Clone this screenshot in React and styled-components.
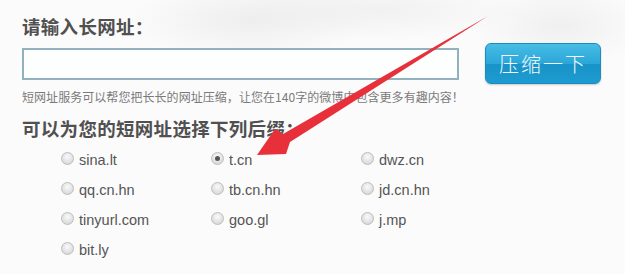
import React from 'react';
import styled, { createGlobalStyle } from 'styled-components';

const GlobalStyle = createGlobalStyle`
  html, body {
    margin: 0;
    padding: 0;
  }
  body {
    background: #fbfbfb;
    font-family: "Liberation Sans", "Noto Sans CJK SC", sans-serif;
  }
`;

const Page = styled.div`
  position: relative;
  width: 625px;
  height: 274px;
  overflow: hidden;
  box-sizing: border-box;
  padding: 13px 0 0 22px;
  background:
    radial-gradient(ellipse 120px 40px at 250px 20px, rgba(225, 225, 225, 0.5), transparent),
    radial-gradient(ellipse 90px 40px at 560px 25px, rgba(228, 228, 228, 0.5), transparent),
    radial-gradient(ellipse 140px 30px at 380px 10px, rgba(230, 230, 230, 0.5), transparent),
    #fbfbfb;
`;

const Heading = styled.h2`
  margin: 0;
  font-family: "Noto Sans CJK SC", sans-serif;
  font-size: 18.5px;
  font-weight: 700;
  line-height: 26px;
  color: #505050;
  letter-spacing: 0.3px;
`;

const InputRow = styled.div`
  display: flex;
  align-items: center;
  margin-top: 4px;
`;

const UrlInput = styled.input`
  box-sizing: border-box;
  width: 437px;
  height: 32px;
  border: 2px solid #93b0bf;
  background: #fdfefe;
  outline: none;
  padding: 0 6px;
`;

const ShrinkButton = styled.button`
  box-sizing: border-box;
  margin-left: 26px;
  width: 116px;
  height: 41px;
  border: 1px solid #1a8cc0;
  border-radius: 6px;
  background: linear-gradient(#47bde6 0%, #2aa6d8 50%, #1993c8 52%, #1d9bd0 100%);
  box-shadow: 0 1px 2px rgba(0, 0, 0, 0.2);
  color: #f4fbff;
  font-family: "Noto Sans CJK SC", sans-serif;
  font-size: 20px;
  font-weight: 300;
  letter-spacing: 2px;
  cursor: pointer;
`;

const Hint = styled.p`
  margin: 4px 0 0;
  font-family: "Noto Sans CJK SC", sans-serif;
  font-size: 12px;
  line-height: 18px;
  color: #7a7a7a;
  letter-spacing: 0.05px;
`;

const SubHeading = styled(Heading)`
  margin-top: 9px;
`;

const OptionGrid = styled.div`
  display: grid;
  grid-template-columns: repeat(3, 150px);
  grid-auto-rows: 30px;
  margin: 4px 0 0 39px;
`;

const Option = styled.label`
  display: flex;
  align-items: center;
  gap: 5px;
  font-size: 14.5px;
  color: #555;
  cursor: pointer;
`;

const Radio = styled.input.attrs({ type: 'radio', name: 'suffix' })`
  appearance: none;
  margin: 0 0 3px;
  width: 13px;
  height: 13px;
  border-radius: 50%;
  border: 1px solid #bdbdbd;
  background: radial-gradient(circle at 50% 35%, #fafafa 0%, #d6d6d6 85%);
  box-sizing: border-box;
  position: relative;

  &:checked::after {
    content: '';
    position: absolute;
    left: 3px;
    top: 3px;
    width: 5px;
    height: 5px;
    border-radius: 50%;
    background: #555;
  }
`;

const Arrow = styled.svg`
  position: absolute;
  left: 0;
  top: 0;
  pointer-events: none;
`;

const suffixes = [
  'sina.lt', 't.cn', 'dwz.cn',
  'qq.cn.hn', 'tb.cn.hn', 'jd.cn.hn',
  'tinyurl.com', 'goo.gl', 'j.mp',
  'bit.ly',
];

const App = () => {
  return (
    <Page>
      <GlobalStyle />
      <Heading>请输入长网址：</Heading>
      <InputRow>
        <UrlInput type="text" />
        <ShrinkButton>压缩一下</ShrinkButton>
      </InputRow>
      <Hint>短网址服务可以帮您把长长的网址压缩，让您在140字的微博中包含更多有趣内容！</Hint>
      <SubHeading>可以为您的短网址选择下列后缀：</SubHeading>
      <OptionGrid>
        {suffixes.map((s) => (
          <Option key={s}>
            <Radio defaultChecked={s === 't.cn'} />
            {s}
          </Option>
        ))}
      </OptionGrid>

      <Arrow width="625" height="274" viewBox="0 0 625 274">
        <polygon
          points="257,155 275,129 283,134 488,16 290,142 286,154"
          fill="#e8303a"
        />
      </Arrow>
    </Page>
  );
};

export default App;
